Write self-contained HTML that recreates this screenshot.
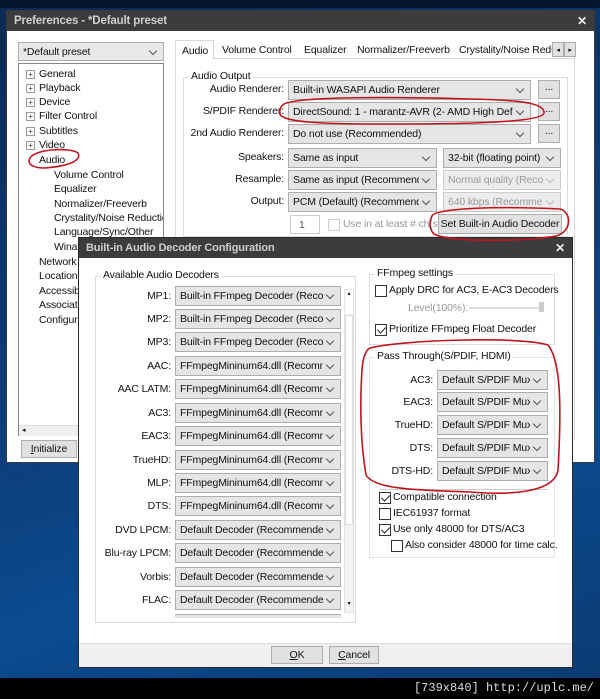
<!DOCTYPE html>
<html><head><meta charset="utf-8"><style>
*{box-sizing:border-box;margin:0;padding:0}
body{width:600px;height:699px;overflow:hidden;position:relative;background:linear-gradient(160deg,#0b2a55 0%,#0d3f7a 50%,#0a4b90 70%,#0c3a70 100%);font-family:"Liberation Sans",sans-serif;font-size:10.5px;letter-spacing:-0.15px;color:#111}
.a{position:absolute}
.win{background:#fff;border:1px solid #3a3a3a}
.tb{background:#3c3c3e;color:#cfcfcf;font-size:11.5px;font-weight:bold;padding:4px 0 0 7px}
.cb{position:absolute;height:20px;background:#e5e5e5;border:1px solid #adadad;padding:3px 0 0 4px;white-space:nowrap;overflow:hidden}
.cb:before{content:"";position:absolute;right:0;top:0;width:17px;height:100%;background:inherit}
.cb:after{content:"";position:absolute;right:7px;top:5px;width:5px;height:5px;border-right:1px solid #555;border-bottom:1px solid #555;transform:rotate(45deg)}
.cb.dis{color:#9a9a9a;background:#ececec;border-color:#ccc}
.cb.dis:after{border-color:#bbb}
.lb{position:absolute;text-align:right;white-space:nowrap}
.bt{position:absolute;background:#e1e1e1;border:1px solid #adadad;text-align:center;white-space:nowrap}
.gb{position:absolute;border:1px solid #dcdcdc}
.gt{position:absolute;background:#fff;padding:0 2px;top:-8px;left:5px;white-space:nowrap}
.ck{position:absolute;width:12px;height:12px;border:1px solid #333;background:#fff}
.ck.on:after{content:"";position:absolute;left:3px;top:0px;width:4px;height:7px;border-right:1.5px solid #222;border-bottom:1.5px solid #222;transform:rotate(45deg)}
.tr div{position:absolute;white-space:nowrap}
.pl{width:9px;height:9px;border:1px solid #999;font-size:8px;line-height:7px;text-align:center;color:#333}
</style></head><body>
<div class="a" style="left:0;top:0;width:600px;height:8px;background:#06162c"></div>
<div class="a win" style="left:6px;top:10px;width:589px;height:453px;background:#fff">
 <div class="tb" style="height:20px">Preferences - *Default preset<span style="position:absolute;right:7px;top:3px;font-size:12px;color:#eee">✕</span></div>
</div>
<div class="cb" style="left:18px;top:42px;width:146px;height:19px;background:#e8e8e8">*Default preset</div>
<div class="a" style="left:18px;top:63px;width:146px;height:373px;border:1px solid #828790;background:#fff;overflow:hidden"></div>
<div class="a" style="left:19px;top:425px;width:144px;height:11px;border-top:1px solid #ddd;background:#f0f0f0;font-size:7px;padding-left:3px">◂</div>
<div class="tr">
 <div class="pl" style="left:26px;top:70px">+</div><div style="left:39px;top:68px">General</div>
 <div class="pl" style="left:26px;top:84px">+</div><div style="left:39px;top:82px">Playback</div>
 <div class="pl" style="left:26px;top:98px">+</div><div style="left:39px;top:96px">Device</div>
 <div class="pl" style="left:26px;top:112px">+</div><div style="left:39px;top:110px">Filter Control</div>
 <div class="pl" style="left:26px;top:127px">+</div><div style="left:39px;top:125px">Subtitles</div>
 <div class="pl" style="left:26px;top:141px">+</div><div style="left:39px;top:139px">Video</div>
 <div style="left:39px;top:154px">Audio</div>
 <div style="left:54px;top:169px">Volume Control</div>
 <div style="left:54px;top:183px">Equalizer</div>
 <div style="left:54px;top:198px">Normalizer/Freeverb</div>
 <div style="left:54px;top:212px;width:109px;overflow:hidden">Crystality/Noise Reductio</div>
 <div style="left:54px;top:226px">Language/Sync/Other</div>
 <div style="left:54px;top:241px">Wina</div>
 <div style="left:39px;top:256px">Network</div>
 <div style="left:39px;top:270px">Location</div>
 <div style="left:39px;top:285px">Accessib</div>
 <div style="left:39px;top:299px">Associati</div>
 <div style="left:39px;top:314px">Configur</div>
</div>
<div class="bt" style="left:21px;top:440px;width:56px;height:18px;padding-top:2px"><u>I</u>nitialize</div>
<div class="a" style="left:175px;top:58px;width:400px;height:382px;border:1px solid #d9d9d9"></div>
<div class="a" style="left:175px;top:40px;width:39px;height:19px;border:1px solid #d9d9d9;border-bottom:none;background:#fff;padding:4px 0 0 6px">Audio</div>
<div class="a" style="left:222px;top:44px;white-space:nowrap">Volume Control</div>
<div class="a" style="left:304px;top:44px">Equalizer</div>
<div class="a" style="left:357px;top:44px;white-space:nowrap">Normalizer/Freeverb</div>
<div class="a" style="left:459px;top:44px;white-space:nowrap;width:93px;overflow:hidden">Crystality/Noise Redu</div>
<div class="bt" style="left:552px;top:42px;width:12px;height:15px;font-size:7px;padding-top:3px">◂</div>
<div class="bt" style="left:564px;top:42px;width:12px;height:15px;font-size:7px;padding-top:3px">▸</div>
<div class="gb" style="left:183px;top:77px;width:385px;height:160px"><div class="gt">Audio Output</div></div>
<div class="lb" style="left:180px;width:104px;top:83px">Audio Renderer:</div>
<div class="cb" style="left:288px;top:80px;width:243px">Built-in WASAPI Audio Renderer</div>
<div class="bt" style="left:538px;top:80px;width:22px;height:19px">...</div>
<div class="lb" style="left:180px;width:104px;top:105px">S/PDIF Renderer:</div>
<div class="cb" style="left:288px;top:102px;width:243px">DirectSound: 1 - marantz-AVR (2- AMD High Definiti</div>
<div class="bt" style="left:538px;top:102px;width:22px;height:19px">...</div>
<div class="lb" style="left:180px;width:104px;top:127px">2nd Audio Renderer:</div>
<div class="cb" style="left:288px;top:124px;width:243px">Do not use (Recommended)</div>
<div class="bt" style="left:538px;top:124px;width:22px;height:19px">...</div>
<div class="lb" style="left:180px;width:104px;top:151px">Speakers:</div>
<div class="cb" style="left:288px;top:148px;width:149px">Same as input</div>
<div class="cb" style="left:443px;top:148px;width:118px">32-bit (floating point)</div>
<div class="lb" style="left:180px;width:104px;top:173px">Resample:</div>
<div class="cb" style="left:288px;top:170px;width:149px">Same as input (Recommendec</div>
<div class="cb dis" style="left:443px;top:170px;width:118px">Normal quality (Recom</div>
<div class="lb" style="left:180px;width:104px;top:195px">Output:</div>
<div class="cb" style="left:288px;top:192px;width:149px">PCM (Default) (Recommendec</div>
<div class="cb dis" style="left:443px;top:192px;width:118px">640 kbps (Recommend</div>
<div class="a" style="left:290px;top:215px;width:30px;height:19px;border:1px solid #ccc;padding:3px 0 0 8px;color:#555">1</div>
<div class="a" style="left:328px;top:219px;width:12px;height:12px;border:1px solid #ccc"></div>
<div class="a" style="left:343px;top:218px;color:#9a9a9a;white-space:nowrap">Use in at least # ch(s)</div>
<div class="bt" style="left:438px;top:214px;width:124px;height:20px;padding-top:3px">Set Built-in Audio Decoder</div>
<div class="a win" style="left:78px;top:237px;width:495px;height:431px;background:#fff;border-color:#2a2a2a">
 <div class="tb" style="height:20px;font-size:11px;padding-top:4px">Built-in Audio Decoder Configuration<span style="position:absolute;right:7px;top:3px;font-size:12px;color:#eee">✕</span></div>
 <div class="a" style="left:0;top:405px;width:493px;height:24px;background:#f0f0f0;border-top:1px solid #ddd"></div>
</div>
<div class="gb" style="left:95px;top:276px;width:261px;height:347px"><div class="gt">Available Audio Decoders</div></div>
<div class="a" style="left:344px;top:289px;width:10px;height:324px;border:1px solid #e2e2e2;background:#f4f4f4"></div>
<div class="a" style="left:345px;top:290px;width:8px;height:24px;background:#fff;font-size:6px;text-align:center">▴</div>
<div class="a" style="left:345px;top:315px;width:8px;height:210px;background:#fff;border:1px solid #ddd"></div>
<div class="a" style="left:345px;top:600px;width:8px;height:12px;font-size:6px;text-align:center">▾</div>
<div class="lb" style="left:100px;width:71px;top:290px">MP1:</div><div class="cb" style="left:175px;top:286px;width:166px">Built-in FFmpeg Decoder (Recomr</div>
<div class="lb" style="left:100px;width:71px;top:313px">MP2:</div><div class="cb" style="left:175px;top:309px;width:166px">Built-in FFmpeg Decoder (Recomr</div>
<div class="lb" style="left:100px;width:71px;top:336px">MP3:</div><div class="cb" style="left:175px;top:332px;width:166px">Built-in FFmpeg Decoder (Recomr</div>
<div class="lb" style="left:100px;width:71px;top:360px">AAC:</div><div class="cb" style="left:175px;top:356px;width:166px">FFmpegMininum64.dll (Recomme</div>
<div class="lb" style="left:100px;width:71px;top:383px">AAC LATM:</div><div class="cb" style="left:175px;top:379px;width:166px">FFmpegMininum64.dll (Recomme</div>
<div class="lb" style="left:100px;width:71px;top:407px">AC3:</div><div class="cb" style="left:175px;top:403px;width:166px">FFmpegMininum64.dll (Recomme</div>
<div class="lb" style="left:100px;width:71px;top:430px">EAC3:</div><div class="cb" style="left:175px;top:426px;width:166px">FFmpegMininum64.dll (Recomme</div>
<div class="lb" style="left:100px;width:71px;top:454px">TrueHD:</div><div class="cb" style="left:175px;top:450px;width:166px">FFmpegMininum64.dll (Recomme</div>
<div class="lb" style="left:100px;width:71px;top:477px">MLP:</div><div class="cb" style="left:175px;top:473px;width:166px">FFmpegMininum64.dll (Recomme</div>
<div class="lb" style="left:100px;width:71px;top:500px">DTS:</div><div class="cb" style="left:175px;top:496px;width:166px">FFmpegMininum64.dll (Recomme</div>
<div class="lb" style="left:100px;width:71px;top:524px">DVD LPCM:</div><div class="cb" style="left:175px;top:520px;width:166px">Default Decoder (Recommended)</div>
<div class="lb" style="left:100px;width:71px;top:547px">Blu-ray LPCM:</div><div class="cb" style="left:175px;top:543px;width:166px">Default Decoder (Recommended)</div>
<div class="lb" style="left:100px;width:71px;top:571px">Vorbis:</div><div class="cb" style="left:175px;top:567px;width:166px">Default Decoder (Recommended)</div>
<div class="lb" style="left:100px;width:71px;top:594px">FLAC:</div><div class="cb" style="left:175px;top:590px;width:166px">Default Decoder (Recommended)</div>
<div class="a" style="left:175px;top:614px;width:166px;height:4px;border-top:1px solid #adadad;background:#e5e5e5"></div>
<div class="gb" style="left:369px;top:274px;width:186px;height:71px"><div class="gt">FFmpeg settings</div></div>
<div class="ck" style="left:375px;top:285px"></div><div class="a" style="left:389px;top:284px;white-space:nowrap">Apply DRC for AC3, E-AC3 Decoders</div>
<div class="a" style="left:408px;top:302px;color:#9a9a9a">Level(100%):</div>
<div class="a" style="left:469px;top:307px;width:75px;height:2px;background:#ddd"></div>
<div class="a" style="left:539px;top:302px;width:5px;height:10px;background:#ccc"></div>
<div class="ck on" style="left:375px;top:324px"></div><div class="a" style="left:389px;top:323px;white-space:nowrap">Prioritize FFmpeg Float Decoder</div>
<div class="gb" style="left:369px;top:357px;width:186px;height:201px;border-color:#e4e4e4"><div class="gt">Pass Through(S/PDIF, HDMI)</div></div>
<div class="a" style="left:380px;top:489px;width:168px;height:1px;background:#ccc"></div>
<div class="lb" style="left:370px;width:63px;top:374px">AC3:</div><div class="cb" style="left:437px;top:370px;width:111px">Default S/PDIF Muxer</div>
<div class="lb" style="left:370px;width:63px;top:396px">EAC3:</div><div class="cb" style="left:437px;top:392px;width:111px">Default S/PDIF Muxer</div>
<div class="lb" style="left:370px;width:63px;top:419px">TrueHD:</div><div class="cb" style="left:437px;top:415px;width:111px">Default S/PDIF Muxer</div>
<div class="lb" style="left:370px;width:63px;top:442px">DTS:</div><div class="cb" style="left:437px;top:438px;width:111px">Default S/PDIF Muxer</div>
<div class="lb" style="left:370px;width:63px;top:465px">DTS-HD:</div><div class="cb" style="left:437px;top:461px;width:111px">Default S/PDIF Muxer</div>
<div class="ck on" style="left:379px;top:492px"></div><div class="a" style="left:393px;top:491px;white-space:nowrap">Compatible connection</div>
<div class="ck" style="left:379px;top:508px"></div><div class="a" style="left:393px;top:507px">IEC61937 format</div>
<div class="ck on" style="left:379px;top:524px"></div><div class="a" style="left:393px;top:523px;white-space:nowrap">Use only 48000 for DTS/AC3</div>
<div class="ck" style="left:391px;top:540px"></div><div class="a" style="left:405px;top:539px;white-space:nowrap">Also consider 48000 for time calc.</div>
<div class="bt" style="left:271px;top:646px;width:52px;height:18px;padding-top:2px"><u>O</u>K</div>
<div class="bt" style="left:329px;top:646px;width:50px;height:18px;padding-top:2px"><u>C</u>ancel</div>
<div class="a" style="left:0;top:678px;width:600px;height:21px;background:#000;color:#ddd;font-family:'Liberation Mono',monospace;font-size:12px;letter-spacing:0;text-align:right;padding:3px 6px 0 0">[739x840] http://uplc.me/</div>
<svg class="a" style="left:0;top:0" width="600" height="699" fill="none" stroke="#c0141c" stroke-width="1.6">
<path d="M284 104 C 300 96 400 97 470 99 C 520 100 545 103 544 113 C 542 124 440 124 380 124 C 320 124 282 122 280 114 C 279 109 281 106 284 104"/>
<path d="M30 158 C 35 149 70 147 78 153 C 82 160 70 166 45 168 C 32 168 27 164 30 158"/>
<path d="M432 216 C 435 208 500 206 560 209 C 572 212 572 232 556 236 C 520 242 450 242 434 234 C 428 228 430 220 432 216"/>
<path d="M370 348 C 400 340 520 336 548 345 C 560 360 562 400 558 470 C 555 490 520 496 470 492 C 420 490 375 490 366 475 C 360 440 360 400 362 370 C 363 356 366 350 370 348"/>
</svg>
</body></html>
